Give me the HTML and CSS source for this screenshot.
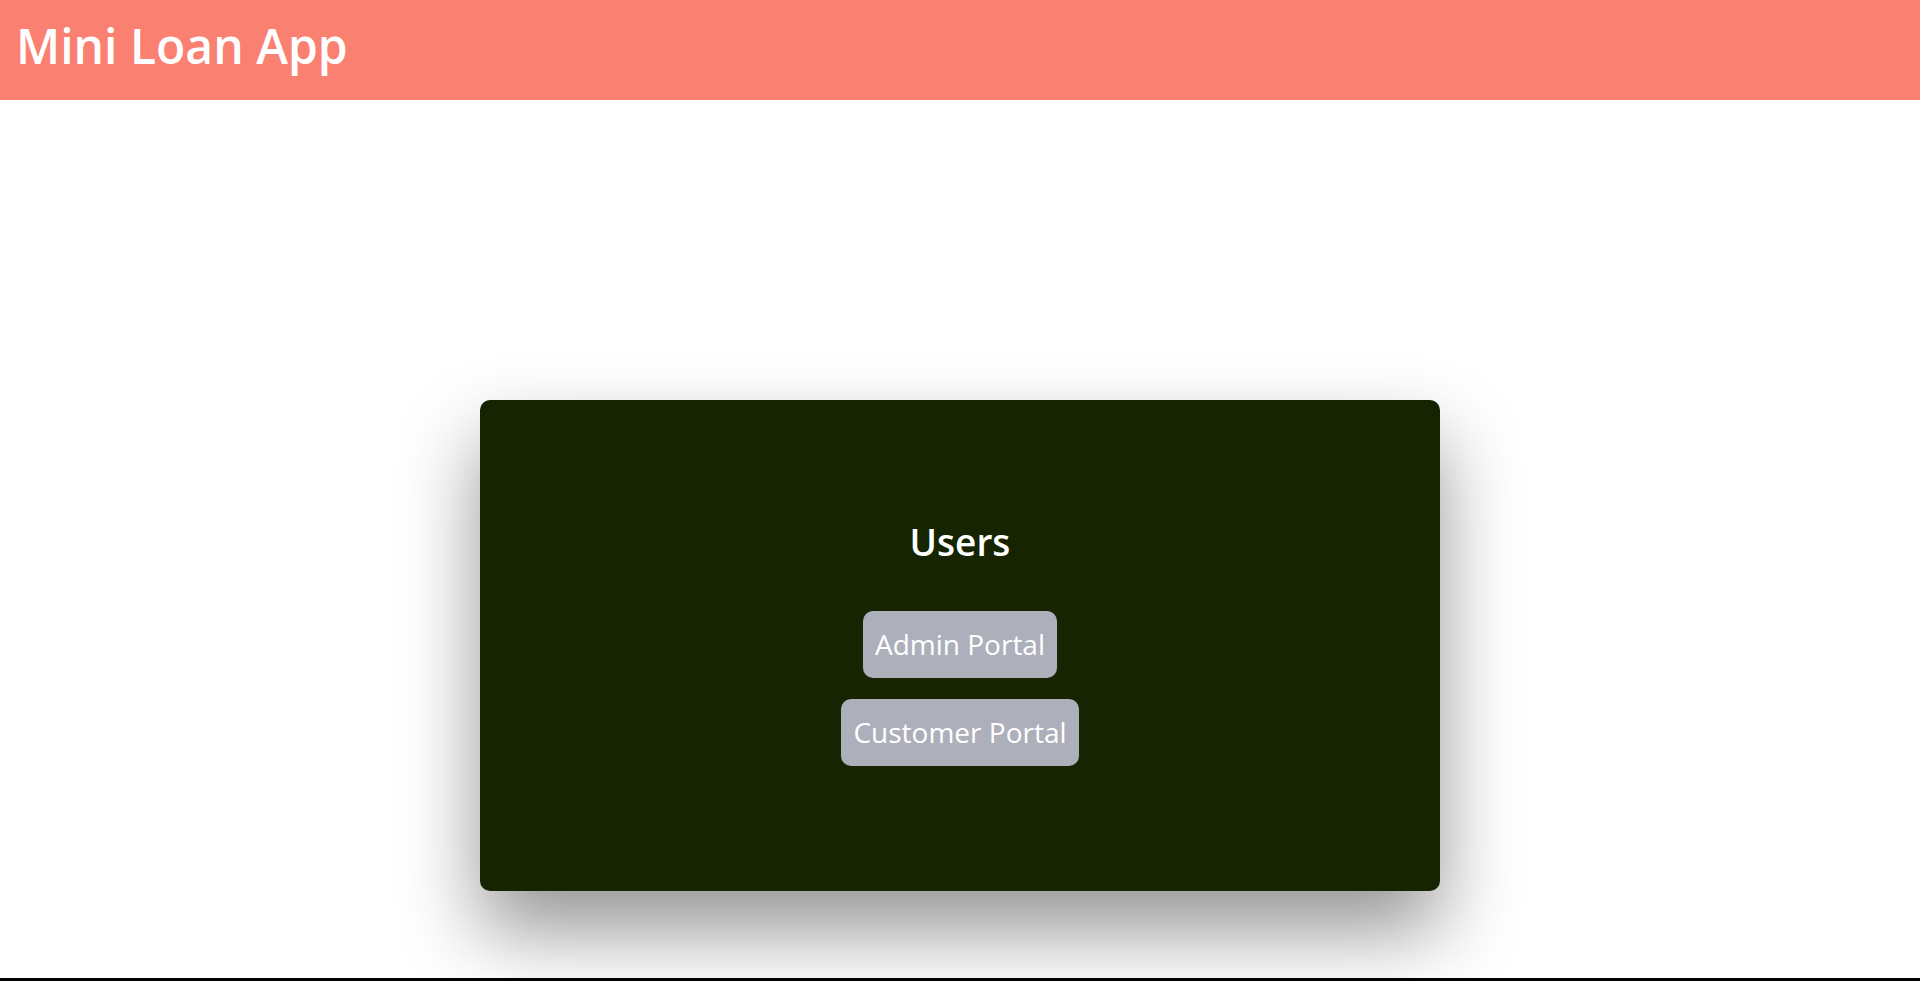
FILE: index.html
```html
<!DOCTYPE html>
<html lang="en">
<head>
<meta charset="utf-8">
<title>Mini Loan App</title>
<link rel="stylesheet" href="styles.css">
</head>
<body>
<div class="page">
  <header class="topbar">
    <h1 class="brand">Mini Loan App</h1>
  </header>
  <main class="main">
    <section class="card">
      <h2 class="card-title">Users</h2>
      <div class="actions">
        <button class="portal-btn">Admin Portal</button>
        <button class="portal-btn">Customer Portal</button>
      </div>
    </section>
  </main>
  <footer class="bottom-line"></footer>
</div>
</body>
</html>
```

FILE: styles.css
```css
* { box-sizing: border-box; }
html, body {
  margin: 0;
  padding: 0;
  height: 100%;
  background: #ffffff;
  font-family: "Open Sans", "Noto Sans", sans-serif;
}
.page {
  height: 100vh;
  display: flex;
  flex-direction: column;
  overflow: hidden;
}
.topbar {
  height: 100px;
  flex-shrink: 0;
  background: #fa8072;
  display: flex;
  align-items: center;
  padding: 0 16px 8px;
}
.brand {
  margin: 0;
  color: #ffffff;
  font-size: 48px;
  font-weight: 600;
  line-height: 60px;
}
.main {
  flex: 1;
  display: flex;
  justify-content: center;
  align-items: flex-start;
  padding-top: 300px;
}
.card {
  width: 960px;
  height: 491px;
  background: #162401;
  border-radius: 10px;
  box-shadow: 0 40px 80px rgba(0, 0, 0, 0.42);
  display: flex;
  flex-direction: column;
  align-items: center;
  justify-content: center;
  padding-bottom: 9px;
}
.card-title {
  margin: 0 0 44px;
  color: #ffffff;
  font-size: 37px;
  font-weight: 600;
  line-height: 50px;
}
.actions {
  display: flex;
  flex-direction: column;
  align-items: center;
  gap: 21px;
}
.portal-btn {
  font-family: inherit;
  font-size: 28px;
  color: #ffffff;
  background: #adafba;
  border: none;
  border-radius: 10px;
  height: 67px;
  padding: 0 12px;
  line-height: 40px;
}
.bottom-line {
  height: 3px;
  background: #000000;
  flex-shrink: 0;
}
```
